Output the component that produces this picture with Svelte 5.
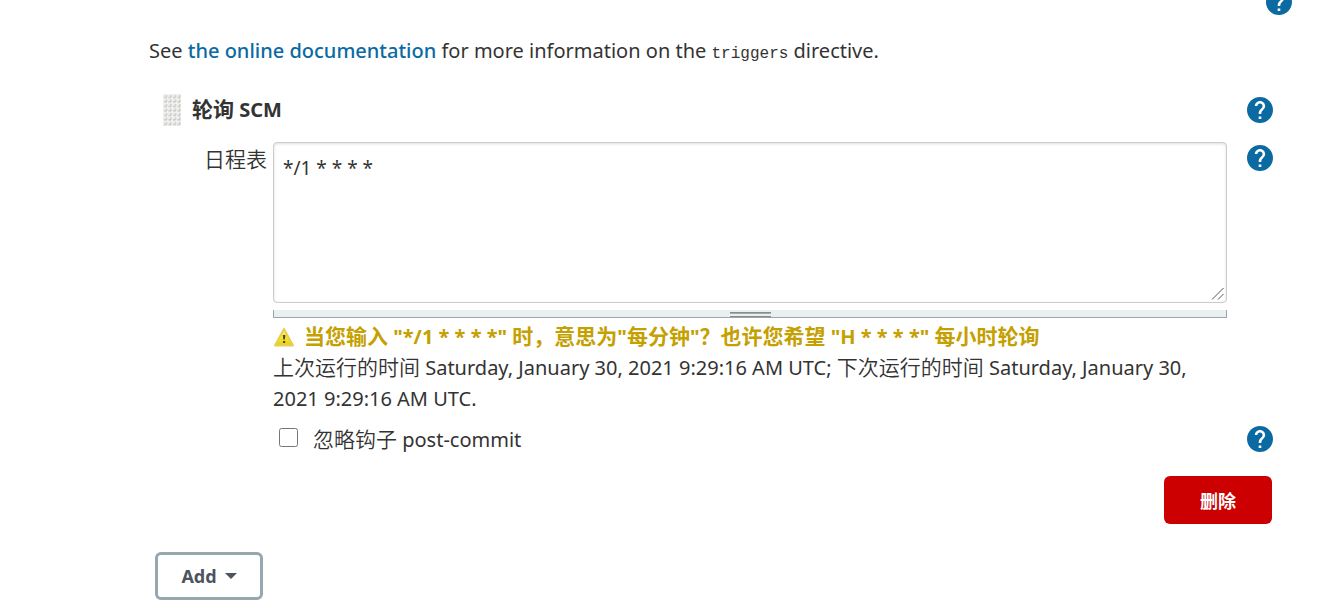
<script>
  let schedule = $state('*/1 * * * *');
  let ignoreHooks = $state(false);
</script>

{#snippet help(label)}
  <button class="help" type="button" aria-label={label}>
    <svg viewBox="2 2 20 20" aria-hidden="true">
      <path fill="#0b6aa2" d="M12 2C6.48 2 2 6.48 2 12s4.48 10 10 10 10-4.48 10-10S17.52 2 12 2zm1 17h-2v-2h2v2zm2.07-7.75l-.9.92C13.45 12.9 13 13.5 13 15h-2v-.5c0-1.1.45-2.1 1.17-2.83l1.24-1.26c.37-.36.59-.86.59-1.41 0-1.1-.9-2-2-2s-2 .9-2 2H8c0-2.21 1.79-4 4-4s4 1.79 4 4c0 .88-.36 1.68-.93 2.25z" />
    </svg>
  </button>
{/snippet}

<main>
  <div class="top">{@render help('Help')}</div>

  <p class="intro">
    See <a href="#docs">the online documentation</a> for more information on the <code>triggers</code> directive.
  </p>

  <section>
    <header>
      <svg class="grip" width="18" height="32" aria-hidden="true">
        <defs>
          <pattern id="dots" width="4.5" height="4.5" patternUnits="userSpaceOnUse">
            <rect width="4" height="4" fill="#efefed" />
            <path d="M1 3h2V1h1v3H1z" fill="#bcbcb7" />
          </pattern>
        </defs>
        <rect width="18" height="32" fill="url(#dots)" />
      </svg>
      <h2><span class="zh">轮询</span> SCM</h2>
      {@render help('Help: SCM')}
    </header>

    <div class="row">
      <label class="name zh" for="schedule">日程表</label>
      <div class="field">
        <textarea id="schedule" bind:value={schedule}></textarea>
        <div class="handle"><i></i></div>
        <div class="warning">
          <svg width="22" height="22" viewBox="0 0 22 22" aria-hidden="true">
            <defs>
              <linearGradient id="amber" x1="0" y1="0" x2="0" y2="1">
                <stop offset="0" stop-color="#fbf39a" />
                <stop offset="0.6" stop-color="#f5df2e" />
                <stop offset="1" stop-color="#e8cb16" />
              </linearGradient>
            </defs>
            <path d="M11 3 20 19.5H2z" fill="url(#amber)" stroke="#e6d04e" stroke-width="2" stroke-linejoin="round" />
            <path d="M9.8 9h2.6l-.5 4.6h-1.6zM10 15h2.2v2H10z" fill="#4e4a22" />
          </svg>
          <strong><span class="zh">当您输入</span> "*/1 * * * *" <span class="zh">时，意思为</span>"<span class="zh">每分钟</span>"<span class="zh">？也许您希望</span> "H * * * *" <span class="zh">每小时轮询</span></strong>
        </div>
        <p class="runs"><span class="zh">上次运行的时间</span> Saturday, January 30, 2021 9:29:16 AM UTC; <span class="zh">下次运行的时间</span> Saturday, January 30, 2021 9:29:16 AM UTC.</p>
      </div>
      {@render help('Help: schedule')}
    </div>

    <div class="row hooks">
      <div class="name"></div>
      <label class="check">
        <input type="checkbox" bind:checked={ignoreHooks} />
        <span><span class="zh">忽略钩子</span> post-commit</span>
      </label>
      {@render help('Help: post-commit hooks')}
    </div>

    <div class="actions"><button class="delete" type="button">删除</button></div>
  </section>

  <button class="add" type="button">
    Add
    <svg width="12" height="6" viewBox="0 0 12 6" aria-hidden="true"><path d="M0 0h12L6 6z" fill="#4d545d" /></svg>
  </button>
</main>

<style>
  :global(body) {
    margin: 0;
    background: #fff;
  }
  main {
    box-sizing: border-box;
    padding: 0 30px 0 149px;
    font: 20px/31px 'Noto Sans', 'Noto Sans CJK SC', sans-serif;
    color: #333;
    overflow: hidden;
  }
  .zh {
    font-family: 'Noto Sans CJK SC', sans-serif;
    font-size: 21px;
    font-weight: 350;
    line-height: 1;
  }
  h2 .zh,
  strong .zh {
    font-weight: 700;
  }
  p, h2 {
    margin: 0;
  }
  button {
    font-family: inherit;
    cursor: pointer;
  }
  .help {
    flex: none;
    width: 26px;
    height: 26px;
    padding: 0;
    border: 0;
    background: none;
  }
  .help svg {
    display: block;
  }
  .top {
    display: flex;
    justify-content: flex-end;
    margin-top: -11px;
  }
  .intro {
    margin-top: 20px;
  }
  a {
    color: #0b6aa2;
    font-weight: 500;
    text-decoration: none;
  }
  code {
    font-family: 'Liberation Mono', monospace;
    font-size: 16px;
  }
  section {
    margin: 24px 20px 0 14px;
  }
  header {
    display: flex;
    align-items: center;
    height: 32px;
  }
  h2 {
    flex: 1;
    margin-left: 11px;
    font-size: 20px;
    line-height: 32px;
    font-weight: 700;
  }
  header > :global(.help),
  .row > :global(.help) {
    margin-right: -1px;
  }
  .row {
    display: flex;
    margin-top: 16px;
  }
  .name {
    flex: none;
    width: 104px;
    margin-right: 6px;
    text-align: right;
    line-height: 32px;
  }
  .field {
    flex: 1;
    min-width: 0;
    margin-right: 20px;
  }
  .row > :global(.help) {
    margin-top: 3px;
  }
  textarea {
    display: block;
    box-sizing: border-box;
    width: 100%;
    height: 161px;
    padding: 10px 9px;
    border: 1px solid #ccc;
    border-radius: 4px;
    box-shadow: inset 0 1px 3px #ddd;
    font: inherit;
    font-size: 19px;
    color: #333;
    background: #fff;
    resize: both;
    outline: none;
  }
  textarea::-webkit-resizer {
    background: url("data:image/svg+xml,%3Csvg xmlns='http://www.w3.org/2000/svg' width='15' height='15'%3E%3Cpath d='M1 12.5 12.5 1M7 12.5 12.5 7' stroke='%23555'/%3E%3C/svg%3E") no-repeat;
  }
  .handle {
    display: flex;
    justify-content: center;
    box-sizing: border-box;
    height: 8px;
    margin-top: 7px;
    border: 1px solid #9aa5ad;
    border-top: 0;
    background: #eaeff2;
  }
  .handle i {
    width: 41px;
    height: 5px;
    margin-top: 2px;
    background: repeating-linear-gradient(#868c86 0 1px, #a4aaa4 1px 2px, #eaeff2 2px 4px);
  }
  .warning {
    display: flex;
    align-items: center;
    gap: 9px;
    margin-top: 3px;
    height: 31px;
    color: #c4a000;
    white-space: nowrap;
  }
  .hooks {
    margin-top: 9px;
  }
  .check {
    flex: 1;
    display: flex;
    align-items: center;
    gap: 15px;
    height: 32px;
  }
  .check input {
    width: 19px;
    height: 19px;
    margin: 0 0 3px 6px;
  }
  .actions {
    display: flex;
    justify-content: flex-end;
    margin-top: 21px;
  }
  .delete {
    width: 108px;
    height: 48px;
    border: 0;
    border-radius: 6px;
    background: #c00;
    color: #fff;
    font: 700 18px 'Noto Sans CJK SC', sans-serif;
  }
  .add {
    display: flex;
    align-items: center;
    justify-content: center;
    gap: 8px;
    box-sizing: border-box;
    width: 108px;
    height: 48px;
    margin: 28px 0 0 6px;
    border: 3px solid #98a6ae;
    border-radius: 6px;
    background: #fff;
    color: #4d545d;
    font-size: 18px;
    font-weight: 700;
  }
</style>
